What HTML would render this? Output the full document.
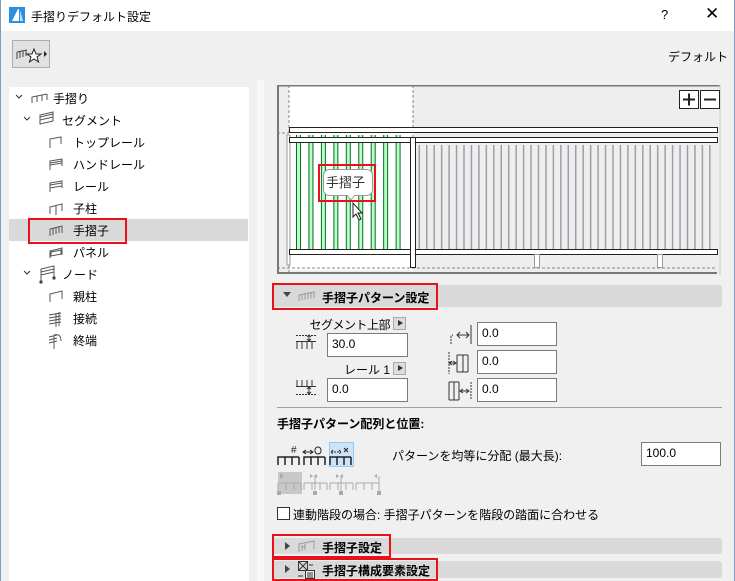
<!DOCTYPE html>
<html><head><meta charset="utf-8"><style>
*{margin:0;padding:0;box-sizing:border-box}
body{width:735px;height:581px;overflow:hidden;background:#f0f0f0;font-family:"Liberation Sans","Noto Sans CJK JP",sans-serif;font-size:12px;color:#000;position:relative}
.a{position:absolute;white-space:nowrap}
.inp{position:absolute;background:#fff;border:1px solid #7a7a7a;padding:3px 0 0 4px;font-size:12px;height:24px}
.hdr{position:absolute;left:272px;width:450px;background:#d9d9d9;border-radius:3px}
.red{position:absolute;border:2px solid #e8111a}
.row{position:absolute;left:9px;width:239px;height:22px}
</style></head><body>
<div class="a" style="left:0;top:0;width:735px;height:31px;background:#fff"></div>
<div class="a" style="left:734px;top:0;width:1px;height:581px;background:#7f9db9"></div>
<div class="a" style="left:0;top:0;width:1px;height:581px;background:#7f9db9"></div>
<svg class="a" style="left:9px;top:7px" width="16" height="16"><rect width="16" height="16" fill="#2a8fe0"/><path d="M3 14 L9 2 L10 2 L10 14Z" fill="#fff"/><path d="M11 3 L14 14 L11 14Z" fill="#bfe2ff"/></svg>
<div class="a" style="left:31px;top:8px;font-size:12px">手摺りデフォルト設定</div>
<div class="a" style="left:661px;top:7px;font-size:13px">?</div>
<div class="a" style="left:705px;top:4px;font-size:17px">✕</div>
<div class="a" style="left:12px;top:40px;width:38px;height:28px;border:1px solid #adadad;background:#e1e1e1"></div>
<svg class="a" style="left:15px;top:44px" width="34" height="20"><path d="M2 8 L12 6 M2 8 V15 M5 7.5V14 M8 7V13 M11 6.5V12" stroke="#444" fill="none"/><path d="M19 5 L21 10 L26 10 L22 13 L23.5 18 L19 15 L14.5 18 L16 13 L12 10 L17 10Z" stroke="#222" fill="#fff"/><path d="M29 7 L32 10 L29 13Z" fill="#222"/></svg>
<div class="a" style="left:668px;top:48px">デフォルト</div>

<div class="a" style="left:9px;top:87px;width:240px;height:494px;background:#fff"></div>
<div class="a" style="left:257px;top:80px;width:7px;height:501px;background:#f7f7f7"></div>
<div class="row" style="top:219px;background:#d9d9d9"></div>
<svg class="a" style="left:9px;top:87px" width="60" height="264" fill="none" stroke="#555">
<path d="M7 8 l3 3 3-3" stroke="#333"/><path d="M23 16 V10 L38 7 M23 10 h0 M28 9V15 M33 8V14 M38 7V13" />
<path d="M15 30 l3 3 3-3" stroke="#333"/><path d="M31 37 L44 34 V25 L31 28Z M31 30 L44 27 M31 33 L44 30"/>
<path d="M41 61 V52 L52 50 V57"/>
<path d="M41 83 V74 L53 72 V79 M41 76 L53 74 M41 78 L53 76"/>
<path d="M41 105 V96 L53 94 V101 M41 98 L53 96 M41 101 L53 99"/>
<path d="M41 127 V120 L53 117 V124 M47 119V128"/>
<path d="M41 149 V142 L53 139 V146 M44 141V148 M47 140V147 M50 140V146"/>
<path d="M41 171 V164 L53 161 V168 M42 165 L52 163 V167 L42 169Z"/>
<path d="M15 184 l3 3 3-3" stroke="#333"/><path d="M32 194 V182 L45 179 V190 M32 185 L45 182 M32 188 L45 185" /><circle cx="32" cy="195" r="1.2" fill="#333"/><circle cx="45" cy="191" r="1.2" fill="#333"/>
<path d="M41 215 V207 L53 204 V212"/>
<path d="M40 228 L52 226 M40 231 L52 229 M40 234 L52 232 M40 237 L52 235 M47 226 V240 M50 225V239"/>
<path d="M40 250 L48 248 M40 253 L48 251 M40 256 L48 254 M45 249 V262 M45 248 Q52 246 52 254"/>
</svg>
<div class="a" style="left:53px;top:90px">手摺り</div>
<div class="a" style="left:62px;top:112px">セグメント</div>
<div class="a" style="left:73px;top:134px">トップレール</div>
<div class="a" style="left:73px;top:156px">ハンドレール</div>
<div class="a" style="left:73px;top:178px">レール</div>
<div class="a" style="left:73px;top:200px">子柱</div>
<div class="a" style="left:73px;top:222px">手摺子</div>
<div class="a" style="left:73px;top:244px">パネル</div>
<div class="a" style="left:62px;top:266px">ノード</div>
<div class="a" style="left:73px;top:288px">親柱</div>
<div class="a" style="left:73px;top:310px">接続</div>
<div class="a" style="left:73px;top:332px">終端</div>
<div class="red" style="left:28px;top:218px;width:99px;height:26px"></div>

<svg class="a" style="left:277px;top:85px" width="444" height="190">
<defs>
<pattern id="g" x="0" y="0" width="7.45" height="10" patternUnits="userSpaceOnUse"><rect x="0" width="1.5" height="10" fill="#9aa0a6"/></pattern>
<pattern id="gr" x="19" y="0" width="12.45" height="10" patternUnits="userSpaceOnUse"><rect x="0" width="5" height="10" fill="#b5ffc6"/><rect x="0" width="1" height="10" fill="#0a6a2a"/><rect x="4" width="1" height="10" fill="#0a6a2a"/></pattern>
</defs>
<rect x="0" y="0" width="444" height="190" fill="#eeeeee"/>
<rect x="12" y="0" width="124" height="185" fill="#fff"/>
<rect x="141" y="60" width="296" height="104" fill="url(#g)"/>
<rect x="19" y="50" width="112" height="114" fill="url(#gr)"/>
<path d="M12 0V190 M136 0V185 M0 48H12 M0 183H440" stroke="#888" stroke-dasharray="3,2" fill="none"/>
<path d="M1 0V188 M0 188H440 M0 0.5H443" stroke="#777" stroke-width="2" fill="none"/>
<path d="M443 0V190" stroke="#ccc"/>
<rect x="10" y="50" width="3" height="130" fill="#fff" stroke="#999"/>
<rect x="12.5" y="42.5" width="428" height="5" fill="#fff" stroke="#222"/>
<rect x="12.5" y="52.5" width="428" height="5" fill="#fff" stroke="#222"/>
<rect x="12.5" y="164.5" width="428" height="5" fill="#fff" stroke="#222"/>
<rect x="133.5" y="52.5" width="5" height="130" fill="#fff" stroke="#222"/>
<rect x="257.5" y="169.5" width="5" height="13" fill="#fff" stroke="#999"/>
<rect x="380.5" y="169.5" width="5" height="13" fill="#fff" stroke="#999"/>
<rect x="402.5" y="5.5" width="19" height="18" fill="#fff" stroke="#222"/><path d="M406 14.5H418 M412 8.5V20.5" stroke="#222" stroke-width="2"/>
<rect x="423.5" y="5.5" width="19" height="18" fill="#fff" stroke="#222"/><path d="M427 14.5H439" stroke="#222" stroke-width="2"/>
<rect x="46.5" y="84.5" width="49" height="26" rx="6" fill="#fff" stroke="#999"/>
<path d="M70 110 L74 115 L78 110" fill="#fff" stroke="#999"/><path d="M71 110H77" stroke="#fff"/>
<path d="M76 118 V132 L79 129 L82 135 L84 134 L81 128 L85 128Z" fill="#fff" stroke="#222"/>
</svg>
<div class="a" style="left:326px;top:172px;font-size:13px;color:#333">手摺子</div>
<div class="red" style="left:318px;top:164px;width:58px;height:38px"></div>

<div class="hdr" style="top:285px;height:22px"></div>
<div class="a" style="left:283px;top:292px;width:0;height:0;border-left:4px solid transparent;border-right:4px solid transparent;border-top:5px solid #444"></div>
<svg class="a" style="left:298px;top:289px" width="20" height="14"><path d="M1 12 V6 L16 3 V9 M4 5.5V11 M7 5V10.5 M10 4.5V10 M13 4V9.5" stroke="#999" fill="none"/></svg>
<div class="a" style="left:322px;top:289px;font-weight:bold">手摺子パターン設定</div>
<div class="red" style="left:272px;top:283px;width:166px;height:27px"></div>

<div class="a" style="right:345px;top:316px;letter-spacing:-0.5px">セグメント上部</div>
<div class="a" style="left:393px;top:317px;width:13px;height:13px;background:#ddd;border:1px solid #aaa"></div><div class="a" style="left:398px;top:320px;border-top:3.5px solid transparent;border-bottom:3.5px solid transparent;border-left:5px solid #333"></div>
<div class="inp" style="left:327px;top:333px;width:81px">30.0</div>
<div class="a" style="right:345px;top:361px">レール 1</div>
<div class="a" style="left:393px;top:362px;width:13px;height:13px;background:#ddd;border:1px solid #aaa"></div><div class="a" style="left:398px;top:365px;border-top:3.5px solid transparent;border-bottom:3.5px solid transparent;border-left:5px solid #333"></div>
<div class="inp" style="left:327px;top:378px;width:81px">0.0</div>
<div class="inp" style="left:477px;top:322px;width:80px">0.0</div>
<div class="inp" style="left:477px;top:350px;width:80px">0.0</div>
<div class="inp" style="left:477px;top:378px;width:80px">0.0</div>
<svg class="a" style="left:296px;top:330px" width="30" height="75" fill="none" stroke="#333">
<path d="M0 5.5H20" stroke-dasharray="2,1"/><path d="M0 11.5H20 M1 11V19 M6 11V19 M11 11V19 M16 11V19 M13 5V11 M11 7L13 5L15 7 M11 9L13 11L15 9"/>
<path d="M1 50V57 M6 50V57 M11 50V57 M16 50V57 M0 56.5H20"/><path d="M0 64.5H20" stroke-dasharray="2,1"/><path d="M13 57V64 M11 59L13 57L15 59 M11 62L13 64L15 62"/>
</svg>
<svg class="a" style="left:447px;top:322px" width="28" height="80" fill="none" stroke="#333">
<path d="M24 3V22 M10 13H22 M13 10L10 13L13 16 M19 10L22 13L19 16"/><path d="M4 22V15 Q4 13 6 13" stroke-dasharray="2,1"/>
<path d="M2 30V52" stroke-dasharray="2,1"/><path d="M10 33V50 M16 33V50 M21 33V50 M10 33H21 M10 50H21 M2 41H9 M5 39L2 41L5 43 M6 39L9 41L6 43"/>
<path d="M2 60V78 M7 60V78 M12 60V78 M2 60H12 M2 78H12 M13 69H22 M16 67L13 69L16 71 M19 67L22 69L19 71"/><path d="M24 60V78" stroke-dasharray="2,1"/>
</svg>
<div class="a" style="left:277px;top:407px;width:445px;height:1px;background:#a0a0a0"></div>
<div class="a" style="left:277px;top:415px;font-weight:bold">手摺子パターン配列と位置:</div>

<div class="a" style="left:329px;top:442px;width:25px;height:25px;background:#cce4f7;border:1px solid #99c9ef"></div>
<svg class="a" style="left:277px;top:440px" width="110" height="60" fill="none" stroke="#222">
<path d="M1 25V17H22 M1 17V25 M8 17V25 M15 17V25 M22 17V25" stroke-width="1.5"/><text x="14" y="13" font-size="10" fill="#222" stroke="none" font-family="Liberation Sans">#</text>
<path d="M27 25V17H48 M27 17V25 M34 17V25 M41 17V25 M48 17V25" stroke-width="1.5"/><path d="M26 12H36 M29 10L26 12L29 14 M33 10L36 12L33 14"/><rect x="38" y="7" width="6" height="7" rx="3"/>
<path d="M53 25V17H74 M53 17V25 M60 17V25 M67 17V25 M74 17V25" stroke-width="1.5"/><path d="M54 12H64 M56 10L54 12L56 14 M62 10L64 12L62 14" stroke-dasharray="2,1"/><path d="M67 8L71 12 M71 8L67 12"/>
<rect x="1" y="32" width="24" height="22" fill="#c8c8c8" stroke="none"/>
<g stroke="#aaa"><path d="M1 43H24 M1 43V52 M9 43V50 M17 43V50 M24 43V50 M27 43H50 M27 43V50 M35 43V50 M43 43V50 M50 43V50 M53 43H76 M53 43V50 M61 43V50 M69 43V50 M76 43V50 M79 43H102 M79 43V50 M87 43V50 M95 43V50 M102 43V50 M38 36V50 M64 36V52 M102 36V52"/></g>
<g fill="#aaa" stroke="none"><path d="M3 33L7 36L3 39Z M33 34L36 36L33 38Z M40 34L37 36L40 38Z M59 34L62 36L59 38Z M66 34L63 36L66 38Z M100 34L97 36L100 38Z"/><rect x="0" y="51" width="4" height="4"/><rect x="36" y="51" width="4" height="4"/><rect x="62" y="51" width="4" height="4"/><rect x="100" y="51" width="4" height="4"/></g>
</svg>
<div class="a" style="left:392px;top:447px">パターンを均等に分配 (最大長):</div>
<div class="inp" style="left:641px;top:442px;width:80px">100.0</div>
<div class="a" style="left:277px;top:507px;width:13px;height:13px;background:#fff;border:1px solid #333"></div>
<div class="a" style="left:293px;top:506px">連動階段の場合: 手摺子パターンを階段の踏面に合わせる</div>

<div class="hdr" style="top:538px;height:16px"></div>
<div class="a" style="left:285px;top:542px;border-top:4px solid transparent;border-bottom:4px solid transparent;border-left:5px solid #444"></div>
<svg class="a" style="left:298px;top:538px" width="20" height="16"><path d="M1 14 V6 L16 3 V11 M1 6 L16 3 M4 7V13 M7 6V12 M4 9H7" stroke="#999" fill="none"/></svg>
<div class="a" style="left:322px;top:539px;font-weight:bold">手摺子設定</div>
<div class="red" style="left:272px;top:534px;width:119px;height:24px"></div>

<div class="hdr" style="top:561px;height:17px"></div>
<div class="a" style="left:285px;top:565px;border-top:4px solid transparent;border-bottom:4px solid transparent;border-left:5px solid #444"></div>
<svg class="a" style="left:297px;top:560px" width="20" height="20" fill="none" stroke="#333"><rect x="1.5" y="1.5" width="9" height="9"/><path d="M1.5 1.5L10.5 10.5 M10.5 1.5L1.5 10.5"/><rect x="8.5" y="10.5" width="9" height="8" fill="#f0f0f0"/><path d="M10 13H16 M10 15H16 M10 17H16 M1 16H6" /><path d="M12 5H16"/></svg>
<div class="a" style="left:322px;top:562px;font-weight:bold">手摺子構成要素設定</div>
<div class="red" style="left:272px;top:558px;width:166px;height:23px"></div>
</body></html>
